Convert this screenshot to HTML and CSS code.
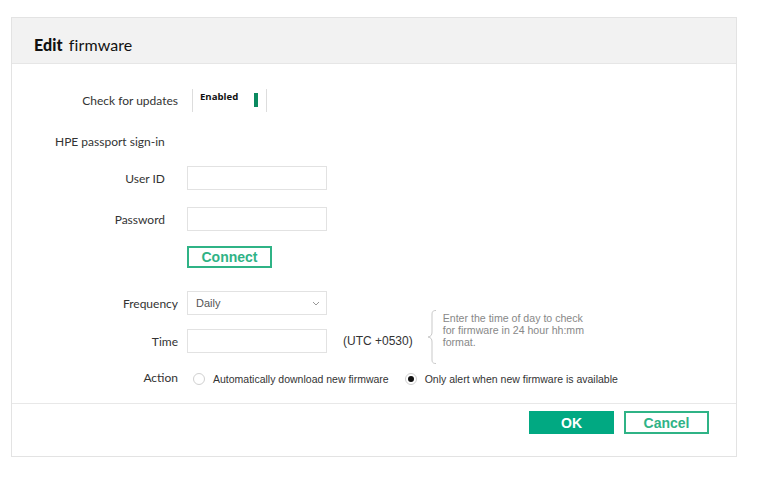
FILE: index.html
```html
<!DOCTYPE html>
<html lang="en">
<head>
    <meta charset="UTF-8">
    <title>Edit firmware</title>
    <link rel="stylesheet" href="styles.css">
</head>
<body>
<div class="dialog">
    <div class="dialog-head">
        <h1><b>Edit</b> firmware</h1>
    </div>
    <div class="dialog-body">
        <div class="row row-check">
            <label class="label">Check for updates</label>
            <div class="toggle">
                <span class="toggle-text">Enabled</span>
                <span class="toggle-bar"></span>
            </div>
        </div>

        <div class="section-title">HPE passport sign-in</div>

        <div class="row row-user sub">
            <label class="label">User ID</label>
            <input class="field" type="text">
        </div>
        <div class="row row-pass sub">
            <label class="label">Password</label>
            <input class="field" type="password">
        </div>
        <div class="row row-connect">
            <span class="label"></span>
            <button class="btn btn-outline btn-connect">Connect</button>
        </div>

        <div class="row row-freq">
            <label class="label">Frequency</label>
            <div class="select">
                <span>Daily</span>
                <svg width="8" height="5" viewBox="0 0 8 5"><path d="M1 1l3 3 3-3" fill="none" stroke="#999" stroke-width="1"/></svg>
            </div>
        </div>
        <div class="row row-time">
            <label class="label">Time</label>
            <input class="field" type="text">
            <span class="utc">(UTC +0530)</span>
            <div class="hint">
                <svg class="brace" width="10" height="54" viewBox="0 0 10 54">
                    <path d="M9 0.5C5.5 0.5 5 2 5 5V22C5 25 4 26.5 1 27C4 27.5 5 29 5 32V49C5 52 5.5 53.5 9 53.5" fill="none" stroke="#c9c9c9" stroke-width="1"/>
                </svg>
                <p>Enter the time of day to check for firmware in 24 hour hh:mm format.</p>
            </div>
        </div>
        <div class="row row-action">
            <label class="label">Action</label>
            <div class="radios">
                <span class="radio"><i class="dot"></i>Automatically download new firmware</span>
                <span class="radio checked"><i class="dot"></i>Only alert when new firmware is available</span>
            </div>
        </div>
    </div>
    <div class="dialog-foot">
        <button class="btn btn-solid">OK</button>
        <button class="btn btn-outline">Cancel</button>
    </div>
</div>
</body>
</html>
```

FILE: styles.css
```css
body {
    margin: 0;
    font-family: Lato, "Liberation Sans", sans-serif;
    color: #333;
    background: #fff;
}
.dialog {
    margin: 17px 0 0 11px;
    width: 724px;
    height: 438px;
    border: 1px solid #e3e3e3;
    display: flex;
    flex-direction: column;
}
.dialog-head {
    height: 45px;
    background: #f2f2f2;
    border-bottom: 1px solid #e6e6e6;
    padding: 0 0 0 22px;
}
.dialog-head h1 {
    margin: 0;
    font-size: 16px;
    font-weight: normal;
    line-height: 53px;
    color: #111;
    letter-spacing: 0.1px;
}
.dialog-head h1 b {
    font-weight: 900;
    margin-right: 2px;
}
.dialog-body {
    flex: 1;
    padding-top: 25px;
    border-bottom: 1px solid #e8e8e8;
}
.row {
    display: flex;
    align-items: center;
}
.label {
    width: 166px;
    flex: none;
    text-align: right;
    font-size: 12px;
    color: #333;
    margin-right: 9px;
}
.row.sub .label {
    width: 153px;
    margin-right: 22px;
}
.toggle {
    margin-left: 5px;
    height: 23px;
    width: 75px;
    border-left: 1px solid #ddd;
    border-right: 1px solid #ddd;
    display: flex;
    align-items: flex-start;
    box-sizing: border-box;
    padding: 0 0 0 7px;
}
.toggle-text {
    font-size: 9.6px;
    font-weight: bold;
    color: #111;
    margin-top: 1px;
    font-family: "Open Sans", sans-serif;
}
.toggle-bar {
    width: 4px;
    height: 14px;
    background: #0b8a60;
    margin: 4px 0 0 16px;
}
.section-title {
    margin: 22px 0 0 43px;
    font-size: 12px;
    color: #333;
}
.row-user { margin-top: 17px; }
.row-pass { margin-top: 17px; }
.row-connect { margin-top: 15px; }
.row-freq { margin-top: 23px; }
.row-time { margin-top: 14px; }
.row-action { margin-top: 17px; }
.field {
    width: 140px;
    height: 24px;
    box-sizing: border-box;
    border: 1px solid #e2e2e2;
    margin: 0;
    padding: 0 6px;
    font: inherit;
}
.select {
    width: 140px;
    height: 24px;
    box-sizing: border-box;
    border: 1px solid #e2e2e2;
    display: flex;
    align-items: center;
    justify-content: space-between;
    padding: 0 6px 0 8px;
    font-family: "Liberation Sans", Arial, sans-serif;
    font-size: 11px;
    color: #555;
}
.utc {
    margin-left: 16px;
    font-family: "Liberation Sans", Arial, sans-serif;
    font-size: 12px;
    color: #333;
}
.hint {
    display: flex;
    align-items: flex-start;
    margin: -19px 0 -11px 14px;
    height: 54px;
}
.brace {
    flex: none;
}
.hint p {
    margin: 2px 0 0 6px;
    width: 146px;
    font-family: "Liberation Sans", Arial, sans-serif;
    font-size: 10.6px;
    line-height: 12px;
    color: #888;
}
.radios {
    display: flex;
    gap: 16px;
    margin-left: 6px;
    margin-top: 2px;
}
.radio {
    display: flex;
    align-items: center;
    font-family: "Liberation Sans", Arial, sans-serif;
    font-size: 10.5px;
    color: #333;
}
.dot {
    width: 10px;
    height: 10px;
    border: 1px solid #d0d0d0;
    border-radius: 50%;
    margin-right: 8px;
    position: relative;
}
.radio.checked .dot::after {
    content: "";
    position: absolute;
    left: 2px;
    top: 2px;
    width: 6px;
    height: 6px;
    border-radius: 50%;
    background: #111;
}
.dialog-foot {
    height: 52px;
    display: flex;
    justify-content: flex-end;
    align-items: flex-start;
    gap: 10px;
    padding: 7px 27px 0 0;
    box-sizing: border-box;
}
.btn {
    width: 85px;
    height: 23px;
    box-sizing: border-box;
    font-family: "Liberation Sans", Arial, sans-serif;
    font-weight: bold;
    font-size: 14px;
    padding: 0;
    cursor: pointer;
}
.btn-solid {
    background: #01a982;
    color: #fff;
    border: none;
}
.btn-outline {
    background: #fff;
    color: #2fb386;
    border: 2px solid #2fb386;
}
.btn-connect {
    height: 22px;
}
```
